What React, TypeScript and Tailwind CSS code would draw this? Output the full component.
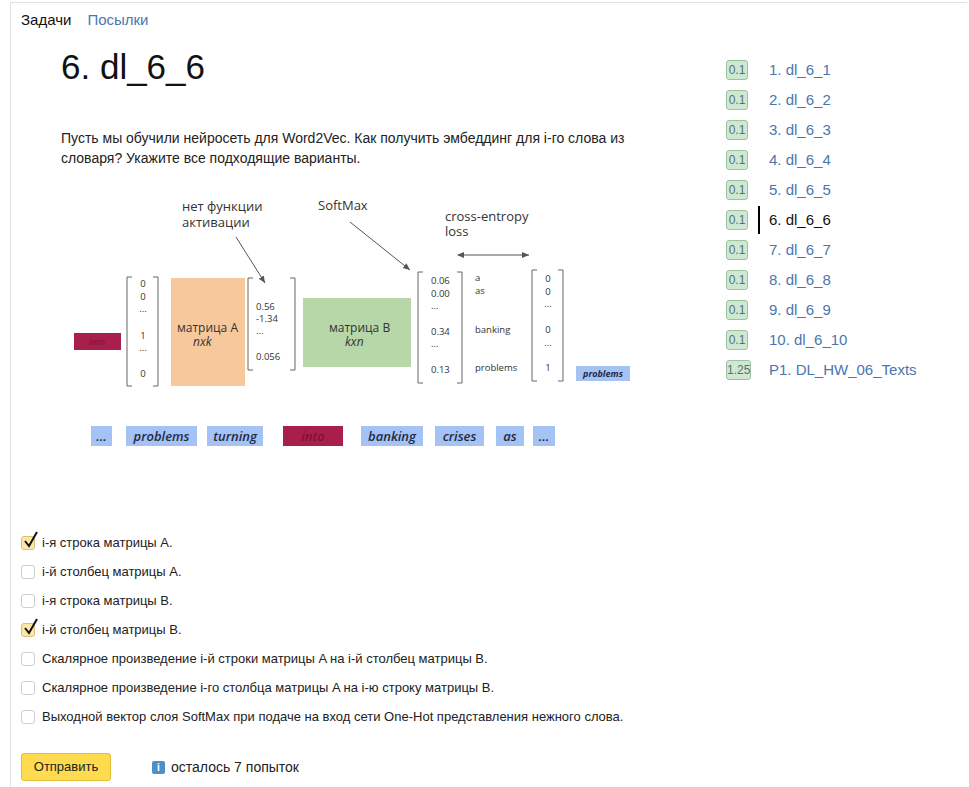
import React from 'react';

const problems = [
  { n: '1. dl_6_1', s: '0.1' },
  { n: '2. dl_6_2', s: '0.1' },
  { n: '3. dl_6_3', s: '0.1' },
  { n: '4. dl_6_4', s: '0.1' },
  { n: '5. dl_6_5', s: '0.1' },
  { n: '6. dl_6_6', s: '0.1', active: true },
  { n: '7. dl_6_7', s: '0.1' },
  { n: '8. dl_6_8', s: '0.1' },
  { n: '9. dl_6_9', s: '0.1' },
  { n: '10. dl_6_10', s: '0.1' },
  { n: 'P1. DL_HW_06_Texts', s: '1.25' },
];

const options = [
  { t: 'i-я строка матрицы A.', c: true },
  { t: 'i-й столбец матрицы A.', c: false },
  { t: 'i-я строка матрицы B.', c: false },
  { t: 'i-й столбец матрицы B.', c: true },
  { t: 'Скалярное произведение i-й строки матрицы A на i-й столбец матрицы B.', c: false },
  { t: 'Скалярное произведение i-го столбца матрицы A на i-ю строку матрицы B.', c: false },
  { t: 'Выходной вектор слоя SoftMax при подаче на вход сети One-Hot представления нежного слова.', c: false },
];

const words = [
  { w: '...', x: 31, width: 21 },
  { w: 'problems', x: 66, width: 71 },
  { w: 'turning', x: 147, width: 56 },
  { w: 'into', x: 223, width: 60, red: true },
  { w: 'banking', x: 301, width: 62 },
  { w: 'crises', x: 375, width: 49 },
  { w: 'as', x: 436, width: 28 },
  { w: '...', x: 473, width: 22 },
];

function Bracket({ x1, x2, y1, y2 }: { x1: number; x2: number; y1: number; y2: number }) {
  return (
    <g stroke="#666" strokeWidth="1" fill="none">
      <path d={`M${x1 + 5} ${y1} H${x1} V${y2} H${x1 + 5}`} />
      <path d={`M${x2 - 5} ${y1} H${x2} V${y2} H${x2 - 5}`} />
    </g>
  );
}

function Diagram() {
  const font = "'Open Sans', 'DejaVu Sans', sans-serif";
  return (
    <svg width="580" height="270" viewBox="0 0 580 270" className="ml-[49px] block" style={{ fontFamily: font }}>
      <defs>
        <marker id="ah" markerWidth="8" markerHeight="8" refX="7" refY="4" orient="auto">
          <path d="M0 1 L7 4 L0 7 Z" fill="#555" />
        </marker>
        <marker id="ah2" markerWidth="8" markerHeight="8" refX="1" refY="4" orient="auto">
          <path d="M7 1 L0 4 L7 7 Z" fill="#555" />
        </marker>
      </defs>

      {/* annotations */}
      <text x="122" y="21" fontSize="13" fill="#333">нет функции</text>
      <text x="122" y="37" fontSize="13" fill="#333">активации</text>
      <line x1="176" y1="47" x2="205" y2="93" stroke="#555" strokeWidth="1" markerEnd="url(#ah)" />
      <text x="258" y="20" fontSize="13" fill="#333">SoftMax</text>
      <line x1="290" y1="32" x2="350" y2="80" stroke="#555" strokeWidth="1" markerEnd="url(#ah)" />
      <text x="385" y="31" fontSize="13" fill="#333">cross-entropy</text>
      <text x="385" y="46" fontSize="13" fill="#333">loss</text>
      <line x1="398" y1="65" x2="469" y2="65" stroke="#555" strokeWidth="1" markerEnd="url(#ah)" markerStart="url(#ah2)" />

      {/* input word */}
      <rect x="14" y="143" width="47" height="17" fill="#a91f4b" />
      <text x="37" y="155" fontSize="9" fontStyle="italic" fill="#7d1234" textAnchor="middle">into</text>

      {/* one-hot */}
      <Bracket x1={67} x2={98} y1={87} y2={196} />
      <g fontSize="9.5" fill="#333" textAnchor="middle">
        <text x="83" y="97">0</text>
        <text x="83" y="110">0</text>
        <text x="83" y="122">...</text>
        <text x="83" y="149">1</text>
        <text x="83" y="161">...</text>
        <text x="83" y="187">0</text>
      </g>

      {/* matrix A */}
      <rect x="111" y="88" width="74" height="108" fill="#f7c89c" />
      <text x="117" y="142" fontSize="12" fill="#333">матрица A</text>
      <text x="133" y="156" fontSize="12" fontStyle="italic" fill="#333">nxk</text>

      {/* hidden */}
      <Bracket x1={188} x2={235} y1={88} y2={180} />
      <g fontSize="9.5" fill="#333">
        <text x="196" y="120">0.56</text>
        <text x="196" y="132">-1.34</text>
        <text x="196" y="144">...</text>
        <text x="196" y="170">0.056</text>
      </g>

      {/* matrix B */}
      <rect x="243" y="108" width="108" height="69" fill="#b7d7a8" />
      <text x="269" y="142" fontSize="12" fill="#333">матрица B</text>
      <text x="285" y="156" fontSize="12" fontStyle="italic" fill="#333">kxn</text>

      {/* softmax output */}
      <Bracket x1={358} x2={402} y1={82} y2={193} />
      <g fontSize="9.5" fill="#333">
        <text x="371" y="94">0.06</text>
        <text x="371" y="107">0.00</text>
        <text x="371" y="119">...</text>
        <text x="371" y="145">0.34</text>
        <text x="371" y="157">...</text>
        <text x="371" y="183">0.13</text>
        <text x="415" y="91">a</text>
        <text x="415" y="104">as</text>
        <text x="415" y="143">banking</text>
        <text x="415" y="181">problems</text>
      </g>

      {/* target */}
      <Bracket x1={472} x2={503} y1={80} y2={191} />
      <g fontSize="9.5" fill="#333" textAnchor="middle">
        <text x="488" y="92">0</text>
        <text x="488" y="105">0</text>
        <text x="488" y="117">...</text>
        <text x="488" y="143">0</text>
        <text x="488" y="156">...</text>
        <text x="488" y="181">1</text>
      </g>
      <rect x="516" y="176" width="54" height="15" fill="#a4c2f4" />
      <text x="543" y="187" fontSize="9" fontStyle="italic" fontWeight="700" fill="#1f2b45" textAnchor="middle">problems</text>

      {/* context window */}
      {words.map((w, i) => (
        <g key={i}>
          <rect x={w.x} y="236" width={w.width} height="20" fill={w.red ? '#a91f4b' : '#a4c2f4'} />
          <text
            x={w.x + w.width / 2}
            y="251"
            fontSize="13"
            fontStyle="italic"
            fontWeight="600"
            fill={w.red ? '#7d1234' : '#1f2b45'}
            textAnchor="middle"
          >
            {w.w}
          </text>
        </g>
      ))}
    </svg>
  );
}

function Check({ checked }: { checked: boolean }) {
  return (
    <span
      className={`relative w-[14px] h-[14px] rounded-[3px] border shrink-0 ${
        checked ? 'bg-[#fbe7a6] border-[#d9c07a]' : 'bg-white border-[#cfcfcf]'
      }`}
    >
      {checked && (
        <svg className="absolute left-[1px] top-[-6px]" width="16" height="18" viewBox="0 0 16 18">
          <path d="M2 10 L6 15 L14 1" stroke="#111" strokeWidth="2" fill="none" />
        </svg>
      )}
    </span>
  );
}

export default function App() {
  return (
    <div className="min-h-[787px] bg-white text-[#222] font-['Liberation_Sans',Arial,sans-serif]">
      <div className="ml-[10px] mt-[2px] mr-[2px] min-h-[785px] border-l border-t border-[#e2e2e2]">
        {/* Tabs */}
        <div className="flex h-[34px] items-center pl-[10px] gap-[16px] text-[15px]">
          <div className="relative">
            <div className="absolute left-0 top-[-14px] w-[50px] h-[3px] bg-black" />
            <span className="text-[#111]">Задачи</span>
          </div>
          <span className="text-[#4a76ad]">Посылки</span>
        </div>

        <div className="flex">
          {/* Main column */}
          <div className="w-[715px] shrink-0">
            <h1 className="pl-[50px] mt-[10px] text-[35px] leading-[40px] text-[#111] font-normal">6. dl_6_6</h1>
            <p className="pl-[50px] mt-[41px] text-[14px] leading-[20px] text-[#222]">
              Пусть мы обучили нейросеть для Word2Vec. Как получить эмбеддинг для i-го слова из
              <br />
              словаря? Укажите все подходящие варианты.
            </p>
            <div className="mt-[22px]">
              <Diagram />
            </div>

            {/* Options */}
            <div className="mt-[68px] pl-[10px] flex flex-col">
              {options.map((o, i) => (
                <label key={i} className="flex items-center h-[29px] gap-[7px] text-[13px] text-[#222]">
                  <Check checked={o.c} />
                  <span>{o.t}</span>
                </label>
              ))}
            </div>

            {/* Submit */}
            <div className="mt-[22px] pl-[10px] flex items-center">
              <button className="w-[90px] h-[28px] rounded-[3px] bg-[#fedb4f] border border-[#e3c037] text-[13px] text-[#222]">
                Отправить
              </button>
              <div className="ml-[41px] flex items-center gap-[6px] text-[14px] text-[#222]">
                <span className="w-[13px] h-[13px] rounded-[2px] bg-[#4f8fc8] text-white text-[10px] font-bold leading-[13px] text-center">
                  i
                </span>
                <span>осталось 7 попыток</span>
              </div>
            </div>
          </div>

          {/* Sidebar */}
          <div className="pt-[18px] flex flex-col">
            {problems.map((p, i) => (
              <div key={i} className="flex items-center h-[30px]">
                <span
                  className={`h-[20px] ${p.s.length > 3 ? 'w-[25px]' : 'w-[22px]'} rounded-[3px] border border-[#9cc3a0] bg-[#cfe8d2] text-[12px] leading-[18px] text-center text-[#56707a]`}
                >
                  {p.s}
                </span>
                <div
                  className={`${p.s.length > 3 ? 'ml-[7px]' : 'ml-[10px]'} pl-[9px] h-[28px] flex items-center border-l-2 text-[15px] ${
                    p.active ? 'border-black text-[#111]' : 'border-transparent text-[#4a76ad]'
                  }`}
                >
                  {p.n}
                </div>
              </div>
            ))}
          </div>
        </div>
      </div>
    </div>
  );
}
